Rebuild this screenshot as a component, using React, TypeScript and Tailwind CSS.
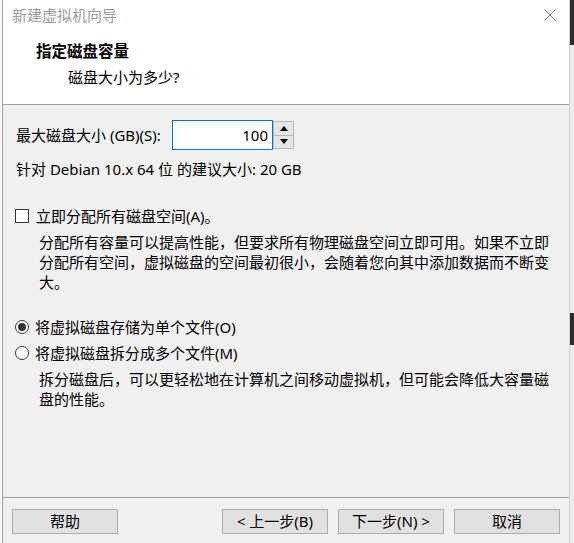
import React from "react";

const font = { fontFamily: "'Noto Sans', 'Noto Sans CJK SC', sans-serif" };

function Button({ children }: { children: React.ReactNode }) {
  return (
    <div className="w-[106px] h-[25px] bg-[#e1e1e1] border border-[#adadad] flex items-center justify-center text-[15px] text-black leading-none">
      {children}
    </div>
  );
}

export default function App() {
  return (
    <div className="w-[574px] h-[543px] flex bg-[#f0f0f0] overflow-hidden" style={font}>
      {/* left frame */}
      <div className="w-[2px] h-full bg-[#f7f7f7]" />
      <div className="w-px h-full bg-[#a0a0a0]" />
      {/* window */}
      <div className="w-[566px] h-full flex flex-col">
        {/* title bar */}
        <div className="h-[30px] bg-white flex items-center justify-between pl-[9px] pr-[13px]">
          <span className="text-[15px] text-[#9b9b9b] leading-none">新建虚拟机向导</span>
          <svg width="12" height="12" viewBox="0 0 12 12">
            <path d="M0.5 0.5 L11.5 11.5 M11.5 0.5 L0.5 11.5" stroke="#7a7a7a" strokeWidth="1" fill="none" />
          </svg>
        </div>
        {/* header */}
        <div className="h-[74px] bg-white border-b border-[#a0a0a0] box-content flex flex-col">
          <div className="mt-[12px] h-[20px] flex items-center pl-[33px] text-[15.5px] font-bold text-black">指定磁盘容量</div>
          <div className="mt-[5px] h-[20px] flex items-center pl-[65px] text-[15px] text-black">磁盘大小为多少?</div>
        </div>
        {/* body */}
        <div className="flex-1 flex flex-col pl-[12px] text-[15px] text-black">
          <div className="mt-[15px] h-[30px] flex items-center">
            <span className="w-[157px] pl-px">最大磁盘大小 (GB)(S):</span>
            <div className="w-[101px] h-[30px] bg-white border border-[#0078d7] flex items-center justify-end pr-[4px]">100</div>
            <div className="w-[21px] h-[28px] flex flex-col">
              <div className="flex-1 bg-[#e5e5e5] border border-[#b8b8b8] flex items-center justify-center">
                <svg width="8" height="5" viewBox="0 0 8 5"><path d="M4 0 L8 5 L0 5 Z" fill="#000" /></svg>
              </div>
              <div className="flex-1 bg-[#e5e5e5] border border-t-0 border-[#b8b8b8] flex items-center justify-center">
                <svg width="8" height="5" viewBox="0 0 8 5"><path d="M0 0 L8 0 L4 5 Z" fill="#000" /></svg>
              </div>
            </div>
          </div>
          <div className="mt-[9px] h-[20px] flex items-center pl-px">针对 Debian 10.x 64 位 的建议大小: 20 GB</div>

          <div className="mt-[27px] h-[20px] flex items-center">
            <div className="w-[14px] h-[14px] border border-[#333] bg-white" />
            <span className="ml-[7px]">立即分配所有磁盘空间(A)。</span>
          </div>
          <div className="mt-[6px] pl-[24px] leading-[20px]">
            分配所有容量可以提高性能，但要求所有物理磁盘空间立即可用。如果不立即<br />
            分配所有空间，虚拟磁盘的空间最初很小，会随着您向其中添加数据而不断变<br />
            大。
          </div>

          <div className="mt-[25px] h-[20px] flex items-center">
            <div className="w-[14px] h-[14px] rounded-full border border-[#333] bg-white flex items-center justify-center">
              <div className="w-[8px] h-[8px] rounded-full bg-[#333]" />
            </div>
            <span className="ml-[6px]">将虚拟磁盘存储为单个文件(O)</span>
          </div>
          <div className="mt-[6px] h-[20px] flex items-center">
            <div className="w-[14px] h-[14px] rounded-full border border-[#333] bg-white" />
            <span className="ml-[6px]">将虚拟磁盘拆分成多个文件(M)</span>
          </div>
          <div className="mt-[6px] pl-[24px] leading-[20px]">
            拆分磁盘后，可以更轻松地在计算机之间移动虚拟机，但可能会降低大容量磁<br />
            盘的性能。
          </div>
        </div>
        {/* footer */}
        <div className="h-[46px] border-t border-[#a0a0a0] flex items-start justify-between px-[9px] pt-[11px]">
          <Button>帮助</Button>
          <div className="flex gap-[10px]">
            <Button>&lt; 上一步(B)</Button>
            <Button>下一步(N) &gt;</Button>
            <Button>取消</Button>
          </div>
        </div>
      </div>
      {/* right frame */}
      <div className="w-[5px] h-full flex flex-col bg-[#ececec] border-l border-[#d0d0d0]">
        <div className="h-[45px] bg-[#2d2d2d]" />
        <div className="h-[268px]" />
        <div className="h-[32px] bg-[#2d2d2d]" />
      </div>
    </div>
  );
}
